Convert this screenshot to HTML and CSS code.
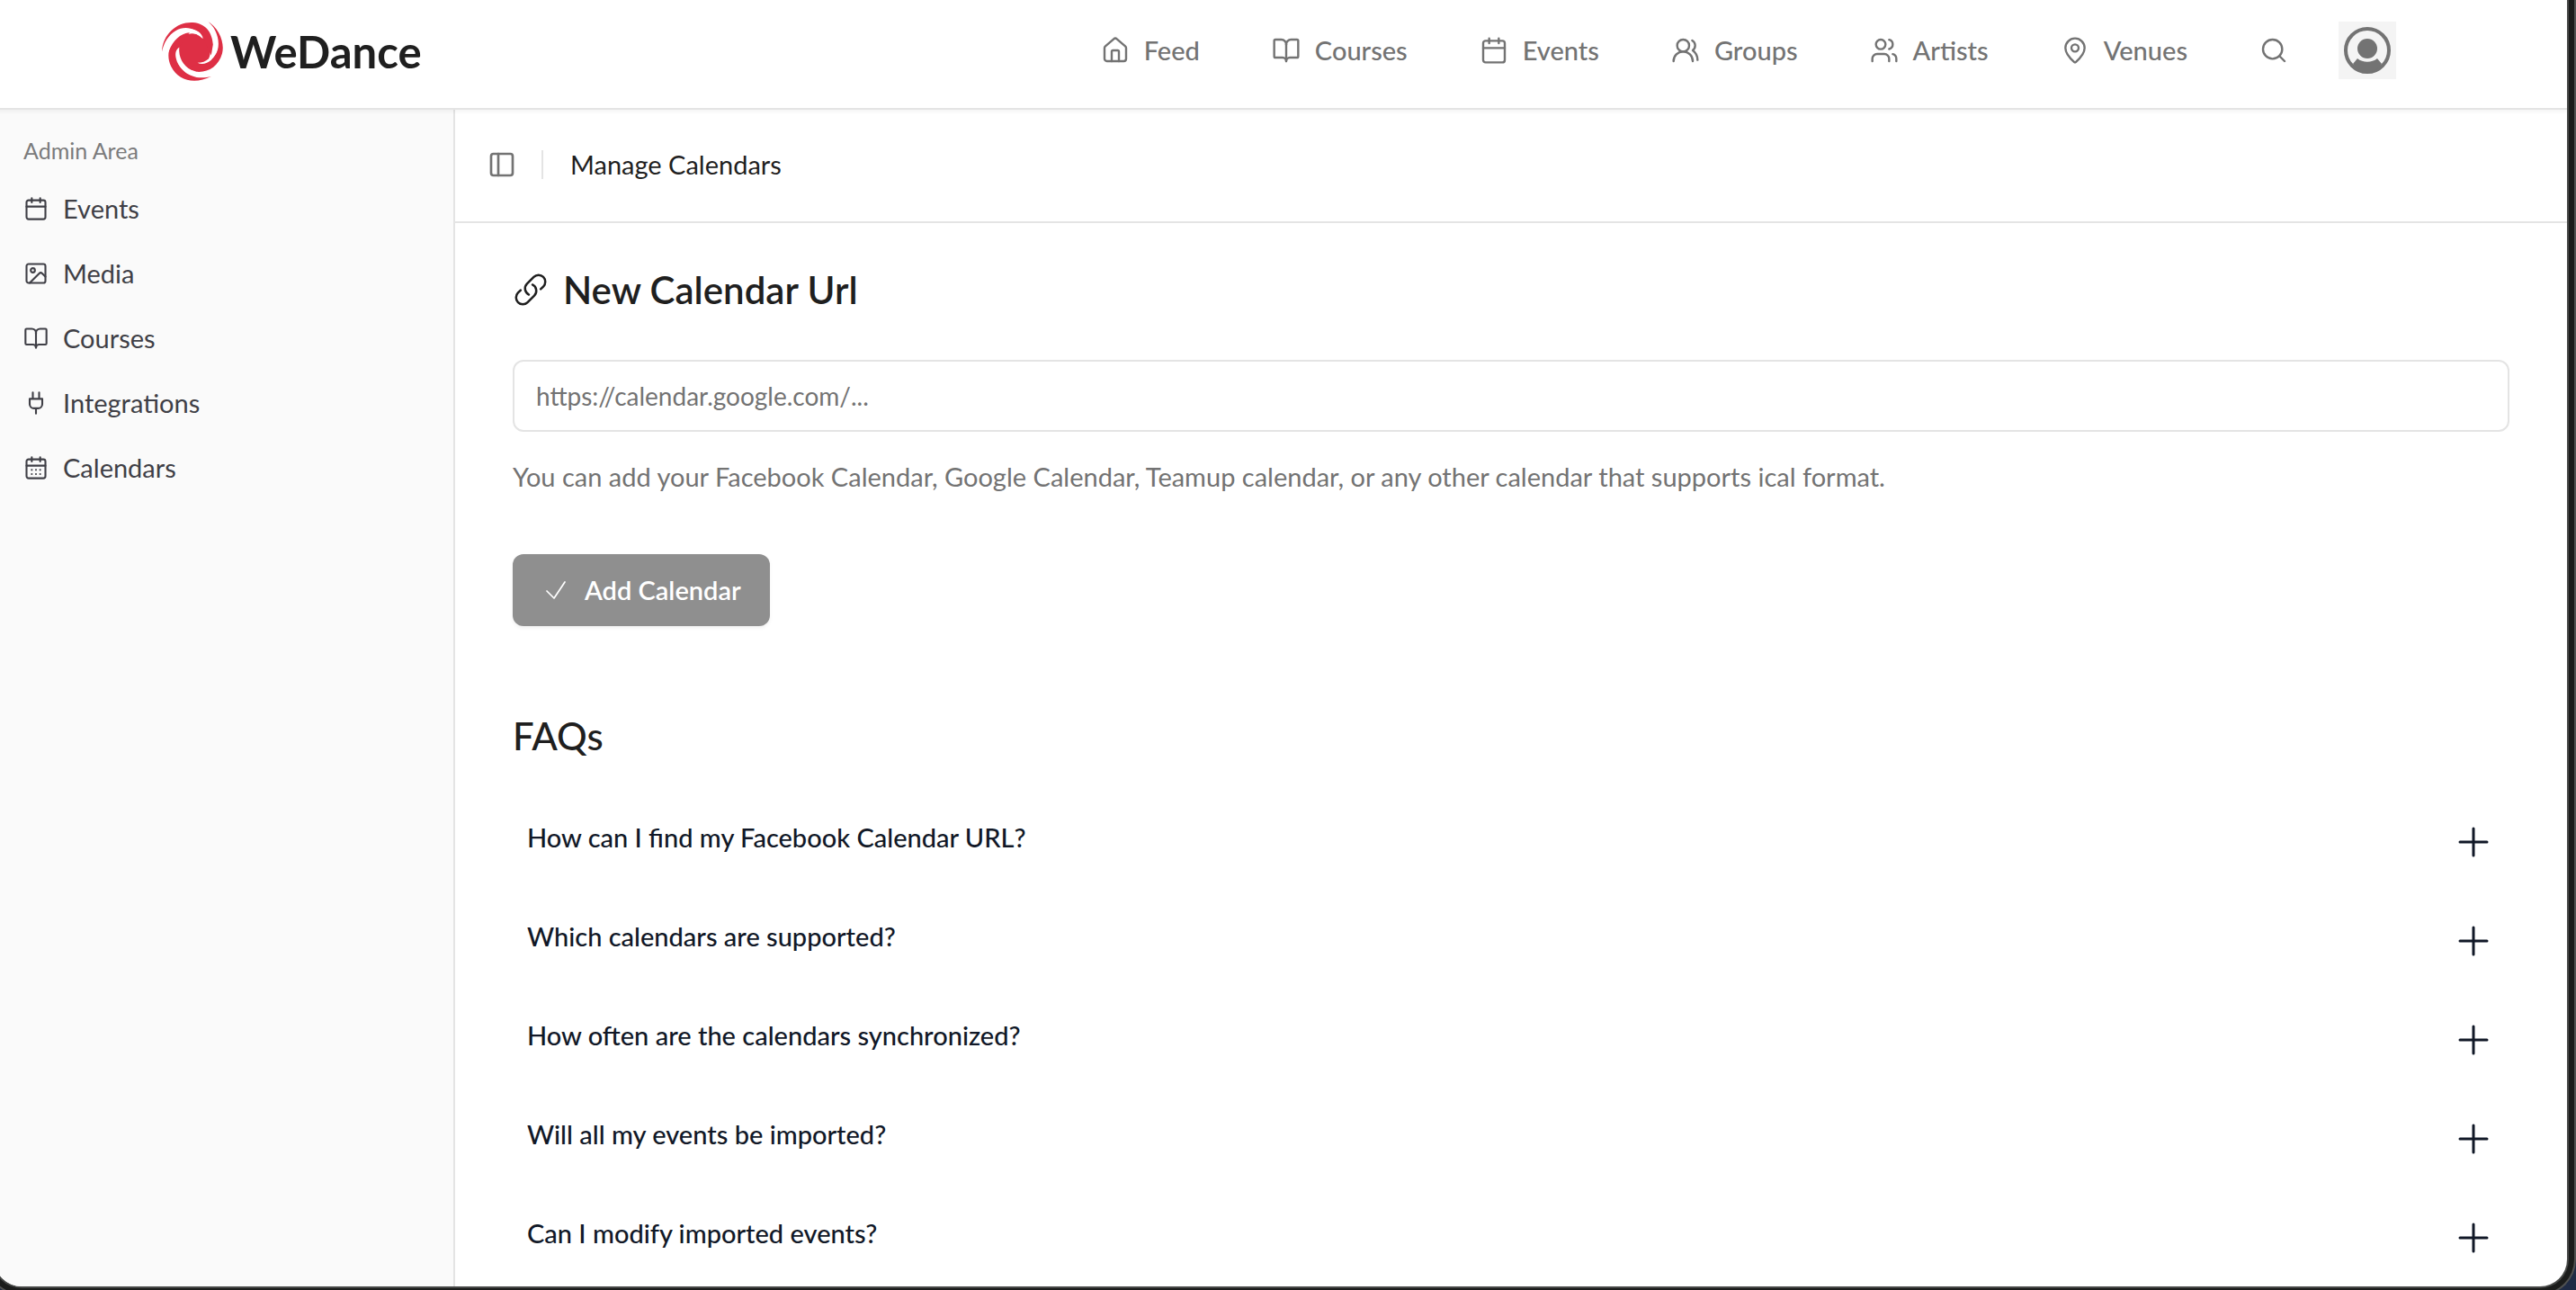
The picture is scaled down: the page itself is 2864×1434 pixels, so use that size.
FILE: index.html
```html
<!DOCTYPE html>
<html lang="en">
<head>
<meta charset="utf-8">
<title>Manage Calendars - WeDance</title>
<meta name="viewport" content="width=device-width, initial-scale=1">
<link rel="stylesheet" href="styles.css">
</head>
<body>
<svg class="sprite" aria-hidden="true">
  <symbol id="calendar" viewBox="0 0 24 24"><path d="M8 2v4M16 2v4M3 10h18"/><rect x="3" y="4" width="18" height="18" rx="2"/></symbol>
  <symbol id="calendar-days" viewBox="0 0 24 24"><path d="M8 2v4M16 2v4M3 10h18M8 14h.01M12 14h.01M16 14h.01M8 18h.01M12 18h.01M16 18h.01"/><rect x="3" y="4" width="18" height="18" rx="2"/></symbol>
  <symbol id="book" viewBox="0 0 24 24"><path d="M12 7v14"/><path d="M3 18a1 1 0 0 1-1-1V4a1 1 0 0 1 1-1h5a4 4 0 0 1 4 4 4 4 0 0 1 4-4h5a1 1 0 0 1 1 1v13a1 1 0 0 1-1 1h-6a3 3 0 0 0-3 3 3 3 0 0 0-3-3z"/></symbol>
  <symbol id="home" viewBox="0 0 24 24"><path d="M15 21v-8a1 1 0 0 0-1-1h-4a1 1 0 0 0-1 1v8"/><path d="M3 10a2 2 0 0 1 .709-1.528l7-5.999a2 2 0 0 1 2.582 0l7 5.999A2 2 0 0 1 21 10v9a2 2 0 0 1-2 2H5a2 2 0 0 1-2-2z"/></symbol>
  <symbol id="groups" viewBox="0 0 24 24"><path d="M18 21a8 8 0 0 0-16 0"/><circle cx="10" cy="8" r="5"/><path d="M22 20c0-3.370-2-6.500-4-8a5 5 0 0 0-.450-8.300"/></symbol>
  <symbol id="users" viewBox="0 0 24 24"><path d="M16 21v-2a4 4 0 0 0-4-4H6a4 4 0 0 0-4 4v2"/><circle cx="9" cy="7" r="4"/><path d="M22 21v-2a4 4 0 0 0-3-3.870M16 3.130a4 4 0 0 1 0 7.750"/></symbol>
  <symbol id="pin" viewBox="0 0 24 24"><path d="M20 10c0 4.993-5.539 10.193-7.399 11.799a1 1 0 0 1-1.202 0C9.539 20.193 4 14.993 4 10a8 8 0 0 1 16 0"/><circle cx="12" cy="10" r="3"/></symbol>
  <symbol id="search" viewBox="0 0 24 24"><circle cx="11" cy="11" r="8"/><path d="m21 21-4.300-4.300"/></symbol>
  <symbol id="image" viewBox="0 0 24 24"><rect x="3" y="3" width="18" height="18" rx="2"/><circle cx="9" cy="9" r="2"/><path d="m21 15-3.086-3.086a2 2 0 0 0-2.828 0L6 21"/></symbol>
  <symbol id="plug" viewBox="0 0 24 24"><path d="M12 22v-5M9 8V2M15 8V2M18 8v5a4 4 0 0 1-4 4h-4a4 4 0 0 1-4-4V8Z"/></symbol>
  <symbol id="panel" viewBox="0 0 24 24"><rect x="3" y="3" width="18" height="18" rx="2"/><path d="M9 3v18"/></symbol>
  <symbol id="link" viewBox="0 0 24 24"><path d="M13.190 8.688a4.500 4.500 0 0 1 1.242 7.244l-4.500 4.500a4.500 4.500 0 0 1-6.364-6.364l1.757-1.757m13.350-.622 1.757-1.757a4.500 4.500 0 0 0-6.364-6.364l-4.500 4.500a4.500 4.500 0 0 0 1.242 7.244"/></symbol>
  <symbol id="check" viewBox="0 0 24 24"><path d="m4.500 12.750 6 6 9-13.500"/></symbol>
  <symbol id="plus" viewBox="0 0 24 24"><path d="M12 4.500v15M4.500 12h15"/></symbol>
</svg>
<div class="desktop">
<div class="device">
<div class="window">
  <header class="topbar">
    <a class="brand" href="#">
      <svg class="brand-mark" viewBox="0 0 67 67" aria-hidden="true">
        <g fill="#de2f45">
          <circle cx="33" cy="34" r="20"/>
          <path d="M0 34C1 14 17 1 34 2C48 3 55 13 56 26L54 38L45 18C38 8 25 5 15 11C7 16 2 24 0 34Z"/>
          <path d="M49 0C63 8 69 24 66 36C62 50 51 57 38 56L26 52L46 46C60 42 64 30 61 18C59 10 55 4 49 0Z"/>
          <path d="M54 61C36 70 18 66 10 50C4 38 8 24 19 15L31 12L18 30C12 46 23 59 38 62C44 63 50 62 54 61Z"/>
        </g>
        <path fill="#fff" d="M5 42C7 23 17 9 29 9C38 9 44 13 45 20C38 13 30 11 23 15C14 19 8 29 5 42Z"/>
        <path fill="#fff" d="M54 7C64 22 62 36 54 43C48 48 43 48 39 46C49 46 55 40 57 30C58 21 57 13 54 7Z"/>
        <path fill="#fff" d="M46 61C31 61 19 53 16 43C14 36 15 32 19 29C18 40 23 49 32 54C38 58 45 60 53 60Z"/>
      </svg>
      <span class="brand-name">WeDance</span>
    </a>
    <nav class="nav" aria-label="Main">
      <a href="#"><svg class="icon"><use href="#home"/></svg>Feed</a>
      <a href="#"><svg class="icon"><use href="#book"/></svg>Courses</a>
      <a href="#"><svg class="icon"><use href="#calendar"/></svg>Events</a>
      <a href="#"><svg class="icon"><use href="#groups"/></svg>Groups</a>
      <a href="#"><svg class="icon"><use href="#users"/></svg>Artists</a>
      <a href="#"><svg class="icon"><use href="#pin"/></svg>Venues</a>
      <button class="icon-button" type="button" aria-label="Search"><svg class="icon"><use href="#search"/></svg></button>
    </nav>
    <button class="avatar" type="button" aria-label="Account">
      <svg viewBox="0 0 64 64" aria-hidden="true">
        <circle cx="32" cy="32" r="24" fill="#f4f4f4" stroke="#737373" stroke-width="4"/>
        <circle cx="32" cy="30" r="11" fill="#737373"/>
        <path fill="#737373" d="M16 47l5-6c6 5 16 5 22 0l5 6c-8 13-24 13-32 0z"/>
      </svg>
    </button>
  </header>
  <div class="body">
    <aside class="sidebar">
      <h2 class="sidebar-title">Admin Area</h2>
      <nav class="menu" aria-label="Admin">
        <a href="#"><svg class="icon"><use href="#calendar"/></svg>Events</a>
        <a href="#"><svg class="icon"><use href="#image"/></svg>Media</a>
        <a href="#"><svg class="icon"><use href="#book"/></svg>Courses</a>
        <a href="#"><svg class="icon"><use href="#plug"/></svg>Integrations</a>
        <a href="#"><svg class="icon"><use href="#calendar-days"/></svg>Calendars</a>
      </nav>
    </aside>
    <main class="main">
      <div class="pagebar">
        <button class="icon-button" type="button" aria-label="Toggle sidebar"><svg class="icon icon-bold"><use href="#panel"/></svg></button>
        <span class="divider"></span>
        <h1 class="page-title">Manage Calendars</h1>
      </div>
      <div class="content">
        <form class="form">
          <label class="heading" for="url"><svg class="icon icon-large"><use href="#link"/></svg>New Calendar Url</label>
          <input class="input" id="url" type="text" placeholder="https://calendar.google.com/...">
          <p class="help">You can add your Facebook Calendar, Google Calendar, Teamup calendar, or any other calendar that supports ical format.</p>
          <button class="submit" type="submit"><svg class="icon icon-thin"><use href="#check"/></svg>Add Calendar</button>
        </form>
        <section class="faqs">
          <h2 class="heading heading-faq">FAQs</h2>
          <button class="question" type="button">How can I find my Facebook Calendar URL?<svg class="icon icon-plus"><use href="#plus"/></svg></button>
          <button class="question" type="button">Which calendars are supported?<svg class="icon icon-plus"><use href="#plus"/></svg></button>
          <button class="question" type="button">How often are the calendars synchronized?<svg class="icon icon-plus"><use href="#plus"/></svg></button>
          <button class="question" type="button">Will all my events be imported?<svg class="icon icon-plus"><use href="#plus"/></svg></button>
          <button class="question" type="button">Can I modify imported events?<svg class="icon icon-plus"><use href="#plus"/></svg></button>
        </section>
      </div>
    </main>
  </div>
</div>
</div>
</div>
</body>
</html>
```
FILE: styles.css
```css
*, *::before, *::after { box-sizing: border-box; }

body {
  margin: 0;
  font-family: Lato, "Noto Sans", sans-serif;
  font-size: 29px;
  line-height: 40px;
  color: #1f1f1f;
}

h1, h2, p { margin: 0; font-size: inherit; font-weight: inherit; }
a { color: inherit; text-decoration: none; }
button { font: inherit; color: inherit; background: none; border: 0; padding: 0; cursor: pointer; }

.sprite { position: absolute; width: 0; height: 0; }

.icon {
  flex: none;
  width: 32px;
  height: 32px;
  fill: none;
  stroke: currentColor;
  stroke-width: 1.5;
  stroke-linecap: round;
  stroke-linejoin: round;
}

/* Window frame on the desktop */
.desktop { height: 100vh; overflow: hidden; background: #1f2b45; }

.device {
  height: calc(100vh + 6px);
  margin-left: -16px;
  padding: 0 6px 6px;
  border: 2px solid #505150;
  border-width: 0 2px 2px;
  border-radius: 0 0 40px 40px;
  background: #1b1c1b;
}

.window {
  display: flex;
  flex-direction: column;
  height: 100%;
  overflow: hidden;
  border: 2px solid #464746;
  border-width: 0 2px 2px;
  border-radius: 0 0 32px 32px;
  background: #fff;
}

/* Top bar */
.topbar {
  position: relative;
  display: flex;
  align-items: center;
  height: 122px;
  flex: none;
  padding: 0 190px 8px 186px;
  border-bottom: 2px solid #e4e4e4;
  box-shadow: 0 2px 4px rgba(0, 0, 0, .05);
}

.brand { display: flex; align-items: center; gap: 8px; padding-top: 2px; }
.brand-mark { width: 68px; height: 68px; }
.brand-name { font-size: 49px; font-weight: 700; line-height: 64px; }

.nav { display: flex; align-items: center; gap: 80px; margin-left: auto; font-weight: 500; color: #737373; }
.nav a { display: flex; align-items: center; gap: 16px; }
.nav .icon { stroke-width: 1.8; }
.icon-button { display: flex; color: #737373; }
.avatar { display: flex; width: 64px; height: 64px; margin-left: 56px; background: #f4f4f4; }

/* Sidebar */
.body { display: flex; flex: 1; min-height: 0; }

.sidebar {
  flex: none;
  width: 512px;
  padding: 16px 32px;
  border-right: 2px solid #e4e4e4;
  background: #fafafa;
}
.sidebar-title { font-size: 25px; line-height: 58px; color: #7b7b7c; }
.menu { display: flex; flex-direction: column; color: #3f3f46; }
.menu a { display: flex; align-items: center; gap: 16px; padding: 16px 0; }
.menu .icon { width: 28px; height: 28px; stroke-width: 1.8; }

/* Main column */
.main { flex: 1; min-width: 0; }

.pagebar {
  display: flex;
  align-items: center;
  height: 126px;
  padding: 0 36px 2px;
  border-bottom: 2px solid #e4e4e4;
}
.icon-bold { stroke-width: 2; }
.divider { width: 2px; height: 32px; margin: 0 30px 0 28px; background: #e4e4e4; }

.content { padding: 46px 64px; }
.form { display: flex; flex-direction: column; align-items: flex-start; }

.heading { display: flex; align-items: center; gap: 16px; font-size: 42px; font-weight: 600; line-height: 56px; }
.icon-large { width: 40px; height: 40px; }

.input {
  width: 100%;
  height: 80px;
  margin: 50px 0 30px;
  padding: 0 24px;
  border: 2px solid #e4e4e4;
  border-radius: 12px;
  font: inherit;
  font-size: 28px;
  color: inherit;
  background: #fff;
}
.input::placeholder { color: #737373; opacity: 1; }
.help { color: #737373; }

.submit {
  display: flex;
  align-items: center;
  gap: 16px;
  height: 80px;
  margin-top: 66px;
  padding: 0 32px;
  border-radius: 12px;
  font-weight: 600;
  color: #fff;
  background: #8f8f8f;
  box-shadow: 0 2px 4px rgba(0, 0, 0, .06);
}
.icon-thin { stroke-width: 1.3; }

.faqs { margin-top: 94px; }
.heading-faq { margin-bottom: 36px; font-weight: 500; }

.question {
  display: flex;
  justify-content: space-between;
  align-items: flex-start;
  width: 100%;
  height: 110px;
  padding: 30px 16px 32px;
  font-weight: 500;
  line-height: 38px;
  text-align: left;
  color: #111827;
}
.icon-plus { width: 48px; height: 48px; }
```
